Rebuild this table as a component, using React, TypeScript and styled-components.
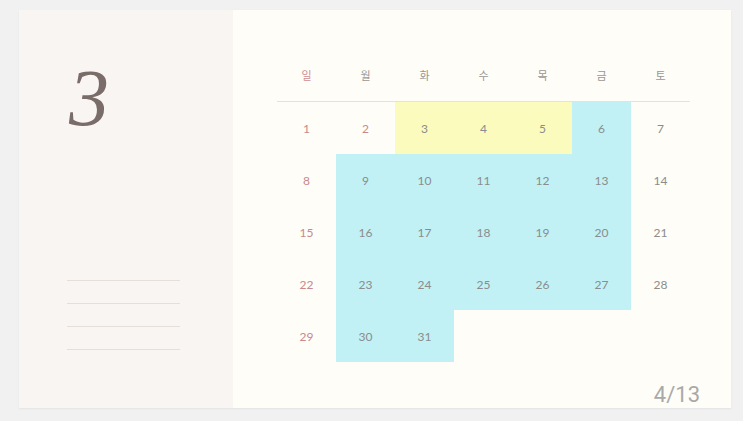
import React from "react";
import styled, { createGlobalStyle } from "styled-components";

const Global = createGlobalStyle`
  html, body { margin: 0; padding: 0; background: #f1f1f1; }
  body { font-family: "Lato", "Noto Sans CJK KR", sans-serif; }
`;

const Page = styled.div`
  width: 743px;
  height: 421px;
  padding: 10px 0 0 19px;
  box-sizing: border-box;
`;

const Card = styled.div`
  position: relative;
  width: 712px;
  height: 398px;
  display: flex;
  box-shadow: 0 1px 2px rgba(0, 0, 0, 0.06);
`;

const Side = styled.div`
  width: 214px;
  background: #f9f5f2;
  padding: 48px 0 0 48px;
  box-sizing: border-box;
  display: flex;
  flex-direction: column;
`;

const Month = styled.div`
  font-family: "Liberation Serif", "DejaVu Serif", serif;
  font-style: italic;
  font-size: 80px;
  line-height: 1;
  color: #7a6c69;
  height: 94px;
  padding-left: 2px;
`;

const Lines = styled.div`
  margin-top: 128px;
  display: flex;
  flex-direction: column;
  gap: 22px;
  width: 113px;
`;

const Line = styled.div`
  height: 1px;
  background: #e6ded8;
`;

const Main = styled.div`
  flex: 1;
  background: #fefdf8;
  padding: 38px 0 0 44px;
  box-sizing: border-box;
`;

const Grid = styled.div`
  display: grid;
  grid-template-columns: repeat(7, 59px);
  grid-template-rows: 54px repeat(5, 52px);
`;

const Head = styled.div<{ $red?: boolean }>`
  display: flex;
  align-items: center;
  justify-content: center;
  font-family: "Noto Sans CJK KR", sans-serif;
  font-size: 11px;
  color: ${(p) => (p.$red ? "#cf8f92" : "#9a9694")};
  border-bottom: 1px solid #e4e2de;
`;

const Cell = styled.div<{ $bg?: string; $red?: boolean }>`
  display: flex;
  align-items: center;
  justify-content: center;
  font-size: 12px;
  background: ${(p) => p.$bg || "transparent"};
  color: ${(p) => (p.$red ? "#c8898d" : "#8a8d8d")};
`;

const PageNum = styled.div`
  position: absolute;
  right: 31px;
  bottom: 0px;
  font-family: "Roboto", sans-serif;
  font-size: 22px;
  color: #a9a9a9;
  line-height: 26px;
`;

const YELLOW = "#fbfbbe";
const CYAN = "#c1f1f4";

const heads = ["일", "월", "화", "수", "목", "금", "토"];

const bgFor = (d: number): string | undefined => {
  if (d >= 3 && d <= 5) return YELLOW;
  if (d === 6) return CYAN;
  const col = (d - 1) % 7;
  if (d >= 8 && d <= 31 && col >= 1 && col <= 5) return CYAN;
  return undefined;
};

export default function App() {
  const days = Array.from({ length: 31 }, (_, i) => i + 1);
  return (
    <Page>
      <Global />
      <Card>
        <Side>
          <Month>3</Month>
          <Lines>
            <Line />
            <Line />
            <Line />
            <Line />
          </Lines>
        </Side>
        <Main>
          <Grid>
            {heads.map((h, i) => (
              <Head key={h} $red={i === 0}>
                {h}
              </Head>
            ))}
            {days.map((d) => (
              <Cell key={d} $bg={bgFor(d)} $red={(d - 1) % 7 === 0 || d === 2}>
                {d}
              </Cell>
            ))}
          </Grid>
        </Main>
        <PageNum>4/13</PageNum>
      </Card>
    </Page>
  );
}
